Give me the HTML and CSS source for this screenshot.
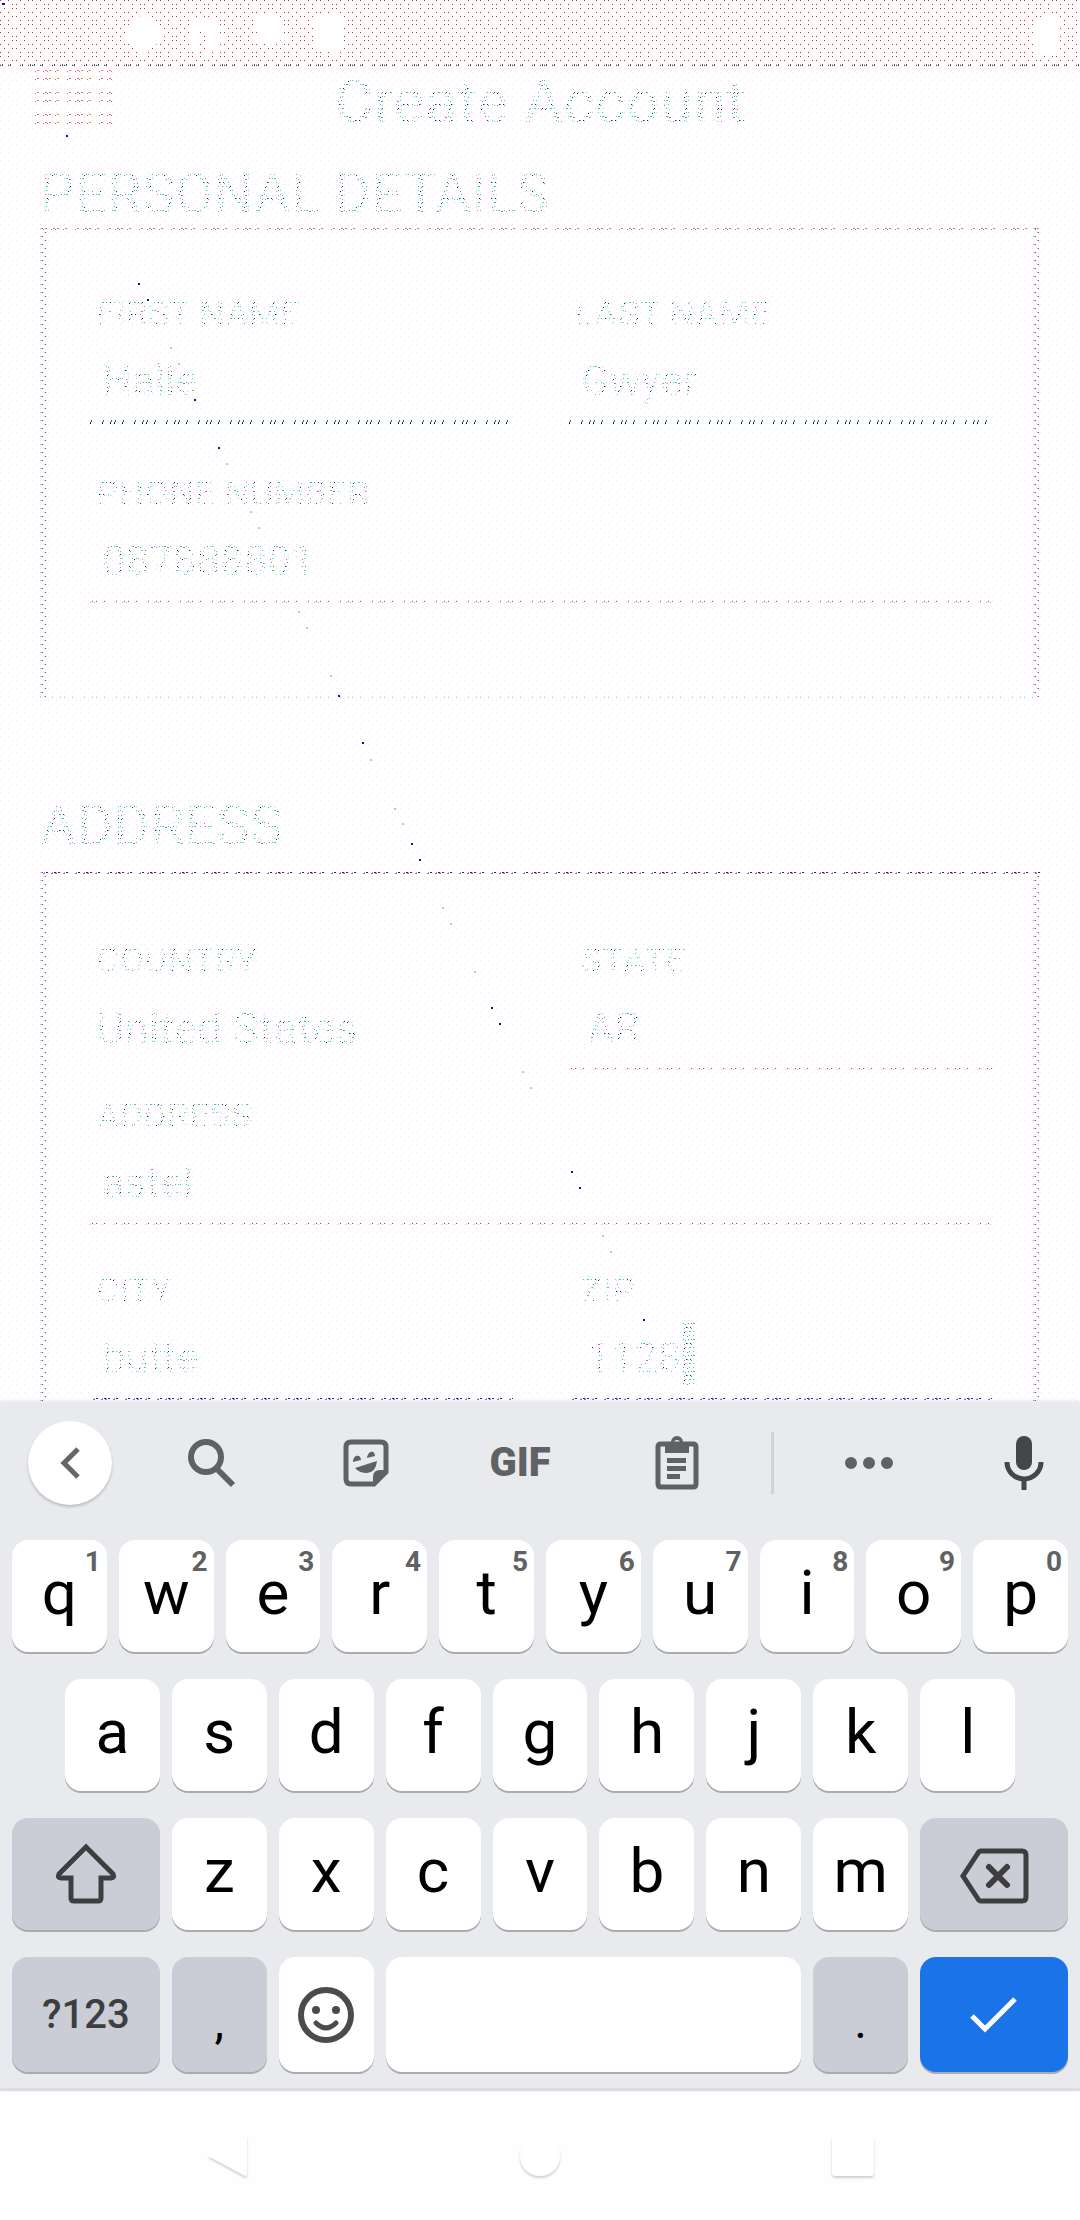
FILE: index.html
```html
<!DOCTYPE html>
<html lang="en">
<head>
<meta charset="utf-8">
<meta name="viewport" content="width=device-width, initial-scale=1">
<title>Create Account</title>
<link rel="stylesheet" href="styles.css">
</head>
<body>
<main class="screen">
  <div class="status">
    <svg class="status-icons" viewBox="0 0 220 40" aria-hidden="true"><path d="M20 2a17 17 0 1 1 0 34a17 17 0 1 1 0-34M66 4h30v32h-12v-20h-8v20h-10zM130 6a20 18 0 0 1 30 0l-4 24h-20zM192 2h28v36h-28z"/></svg>
    <svg class="battery" viewBox="0 0 24 40" aria-hidden="true"><path d="M7 0h10v4h7v36H0V4h7z"/></svg>
  </div>
  <header class="appbar">
    <button class="menu" type="button" aria-label="Menu"><span></span><span></span><span></span></button>
    <h1 class="grain title">Create Account</h1>
  </header>
  <form class="form">
    <h2 class="grain heading">PERSONAL DETAILS</h2>
    <section class="card personal">
      <div class="field green"><label class="grain" for="first">FIRST NAME</label><input class="grain" id="first" value="Halle"></div>
      <div class="field green"><label class="grain" for="last">LAST NAME</label><input class="grain" id="last" value="Gwyer"></div>
      <div class="field wide"><label class="grain" for="phone">PHONE NUMBER</label><input class="grain" id="phone" value="087888801"></div>
    </section>
    <h2 class="grain heading">ADDRESS</h2>
    <section class="card address">
      <div class="field plain"><label class="grain" for="country">COUNTRY</label><select class="grain" id="country"><option>United States</option></select></div>
      <div class="field end"><label class="grain" for="state">STATE</label><input class="grain" id="state" value="AR"></div>
      <div class="field wide"><label class="grain" for="street">ADDRESS</label><input class="grain" id="street" value="astel"></div>
      <div class="field violet"><label class="grain" for="city">CITY</label><input class="grain" id="city" value="butte"></div>
      <div class="field violet end"><label class="grain" for="zip">ZIP</label><input class="grain" id="zip" value="1128"><i class="caret"></i></div>
    </section>
  </form>
  <svg class="specks" width="660" height="1340" aria-hidden="true">
    <path stroke="#10109a" stroke-width="2" d="M66 136h2M2 4h3M138 284h2M147 300h2M194 400h2M218 448h2M338 696h2M362 743h2M411 844h2M419 860h2M491 1008h2M499 1024h2M571 1172h2M579 1188h2M643 1320h2"/>
    <path stroke="#20d040" stroke-width="1" d="M170 348h2M178 364h2M226 464h2M250 512h2M258 528h2M298 612h2M306 628h2M330 676h2M370 760h2M394 809h2M402 824h2M442 908h2M450 924h2M474 972h2M522 1072h2M530 1088h2M602 1236h2M610 1252h2"/>
  </svg>
</main>

<section class="keyboard" aria-label="Keyboard">
  <div class="tools">
    <button type="button" class="back" aria-label="Back"><svg width="84" height="84" viewBox="0 0 84 84"><path d="M50 28 36 42l14 14" fill="none" stroke="#666" stroke-width="5"/></svg></button>
    <button type="button" aria-label="Search"><svg width="48" height="50" viewBox="0 0 48 50"><circle cx="18" cy="19" r="15" fill="none" stroke="#606163" stroke-width="6"/><path d="m29 31 16 16" stroke="#606163" stroke-width="6"/></svg></button>
    <button type="button" aria-label="Stickers"><svg width="46" height="48" viewBox="0 0 46 48"><path d="M8 3h30q5 0 5 5v25L31 45H8q-5 0-5-5V8q0-5 5-5z" fill="none" stroke="#606163" stroke-width="5"/><path d="M30 46V38q0-7 7-7h8zM12 29l22-7q-1 11-10 12-8 0-12-5zM10 23c0-8 8-8 8-2zM24 19c1-8 8-8 8-2z" fill="#606163"/></svg></button>
    <button type="button" class="gif">GIF</button>
    <button type="button" aria-label="Clipboard"><svg width="44" height="54" viewBox="0 0 44 54"><path d="M6 8h32q3 0 3 3v37q0 3-3 3H6q-3 0-3-3V11q0-3 3-3z" fill="none" stroke="#606163" stroke-width="5"/><path fill-rule="evenodd" d="M10 6h6a6 6 0 0 1 12 0h6v11H10zM22 4a3 3 0 1 0 0 6 3 3 0 0 0 0-6M12 22h19v5H12zM12 30h19v5H12zM12 38h13v5H12z" fill="#606163"/></svg></button>
    <span class="divider"></span>
    <button type="button" aria-label="More"><svg width="48" height="12" viewBox="0 0 48 12"><path d="M6 0a6 6 0 1 0 0 12A6 6 0 0 0 6 0M24 0a6 6 0 1 0 0 12A6 6 0 0 0 24 0M42 0a6 6 0 1 0 0 12A6 6 0 0 0 42 0" fill="#606163"/></svg></button>
    <button type="button" aria-label="Voice"><svg width="40" height="54" viewBox="0 0 40 54"><rect x="12" y="0" width="16" height="34" rx="8" fill="#454648"/><path d="M3 26a17 17 0 0 0 34 0M20 42v12" fill="none" stroke="#454648" stroke-width="5"/></svg></button>
  </div>
  <div class="keys">
    <div class="row">
      <button class="key">q<sup>1</sup></button><button class="key">w<sup>2</sup></button><button class="key">e<sup>3</sup></button><button class="key">r<sup>4</sup></button><button class="key">t<sup>5</sup></button><button class="key">y<sup>6</sup></button><button class="key">u<sup>7</sup></button><button class="key">i<sup>8</sup></button><button class="key">o<sup>9</sup></button><button class="key">p<sup>0</sup></button>
    </div>
    <div class="row inset">
      <button class="key">a</button><button class="key">s</button><button class="key">d</button><button class="key">f</button><button class="key">g</button><button class="key">h</button><button class="key">j</button><button class="key">k</button><button class="key">l</button>
    </div>
    <div class="row">
      <button class="key grey big" aria-label="Shift"><svg width="62" height="62" viewBox="0 0 62 62"><path d="M31 4 4 31q-2 4 2 4h10v20q0 3 3 3h24q3 0 3-3V35h10q4 0 2-4z" fill="none" stroke="#3e3e40" stroke-width="5"/></svg></button>
      <button class="key">z</button><button class="key">x</button><button class="key">c</button><button class="key">v</button><button class="key">b</button><button class="key">n</button><button class="key">m</button>
      <button class="key grey big" aria-label="Delete"><svg class="erase" width="70" height="56" viewBox="0 0 70 56"><path d="M22 3h41q4 0 4 4v42q0 4-4 4H22q-2 0-3-2L4 28 19 5q1-2 3-2z" fill="none" stroke="#3e3e40" stroke-width="5"/><path d="m30 19 18 18M48 19 30 37" stroke="#3e3e40" stroke-width="6" stroke-linecap="round"/></svg></button>
    </div>
    <div class="row last">
      <button class="key grey big symbols">?123</button>
      <button class="key grey fixed mark">,</button>
      <button class="key fixed" aria-label="Emoji"><svg width="56" height="58" viewBox="0 0 56 58"><circle cx="28" cy="29" r="25" fill="none" stroke="#4b4b4b" stroke-width="6"/><circle cx="18" cy="24" r="4" fill="#4b4b4b"/><circle cx="38" cy="24" r="4" fill="#4b4b4b"/><path d="M18 37q10 10 20 0" fill="none" stroke="#4b4b4b" stroke-width="5" stroke-linecap="round"/></svg></button>
      <button class="key" aria-label="Space"></button>
      <button class="key grey fixed mark">.</button>
      <button class="key blue big" aria-label="Done"><svg width="50" height="40" viewBox="0 0 50 40"><path d="m3 21 13 13L46 4" fill="none" stroke="#fff" stroke-width="5"/></svg></button>
    </div>
  </div>
</section>

<nav class="nav">
  <button type="button" aria-label="Back"><svg width="44" height="50" viewBox="0 0 44 50"><path d="M3 23 40 3q2 0 2 2v36q0 2-2 2z" fill="#fff"/></svg></button>
  <button type="button" aria-label="Home"><svg width="44" height="50" viewBox="0 0 44 50"><circle cx="22" cy="23" r="20" fill="#fff"/></svg></button>
  <button type="button" aria-label="Recent apps"><svg width="44" height="50" viewBox="0 0 44 50"><rect x="1" y="3" width="42" height="40" rx="3" fill="#fff"/></svg></button>
</nav>
</body>
</html>
```
FILE: styles.css
```css
:root {
  --red-dots: url("data:image/svg+xml,%3Csvg xmlns='http://www.w3.org/2000/svg' width='32' height='32' shape-rendering='crispEdges'%3E%3Cpath fill='%23ff1010' d='M0 0h1v1h-1zM8 0h1v1h-1zM20 0h1v1h-1zM28 0h1v1h-1zM4 4h1v1h-1zM12 4h1v1h-1zM16 4h1v1h-1zM24 4h1v1h-1zM4 8h1v1h-1zM12 8h1v1h-1zM16 8h1v1h-1zM24 8h1v1h-1zM0 12h1v1h-1zM8 12h1v1h-1zM20 12h1v1h-1zM28 12h1v1h-1zM4 16h1v1h-1zM12 16h1v1h-1zM16 16h1v1h-1zM24 16h1v1h-1zM0 20h1v1h-1zM8 20h1v1h-1zM20 20h1v1h-1zM28 20h1v1h-1zM0 24h1v1h-1zM8 24h1v1h-1zM20 24h1v1h-1zM28 24h1v1h-1zM4 28h1v1h-1zM12 28h1v1h-1zM16 28h1v1h-1zM24 28h1v1h-1z'/%3E%3C/svg%3E");
  --pale-dots: url("data:image/svg+xml,%3Csvg xmlns='http://www.w3.org/2000/svg' width='32' height='32' shape-rendering='crispEdges'%3E%3Cpath fill='%23ffdcff' d='M0 0h1v1h-1zM8 0h1v1h-1zM20 0h1v1h-1zM28 0h1v1h-1zM4 4h1v1h-1zM12 4h1v1h-1zM16 4h1v1h-1zM24 4h1v1h-1zM4 8h1v1h-1zM12 8h1v1h-1zM16 8h1v1h-1zM24 8h1v1h-1zM0 12h1v1h-1zM8 12h1v1h-1zM20 12h1v1h-1zM28 12h1v1h-1zM4 16h1v1h-1zM12 16h1v1h-1zM16 16h1v1h-1zM24 16h1v1h-1zM0 20h1v1h-1zM8 20h1v1h-1zM20 20h1v1h-1zM28 20h1v1h-1zM0 24h1v1h-1zM8 24h1v1h-1zM20 24h1v1h-1zM28 24h1v1h-1zM4 28h1v1h-1zM12 28h1v1h-1zM16 28h1v1h-1zM24 28h1v1h-1z'/%3E%3C/svg%3E");
  --grain: url("data:image/svg+xml,%3Csvg xmlns='http://www.w3.org/2000/svg' width='16' height='16' shape-rendering='crispEdges'%3E%3Cpath fill='%2310dcd8' d='M0 0h1v1h-1zM8 0h1v1h-1zM4 4h1v1h-1zM12 4h1v1h-1zM2 8h1v1h-1zM10 8h1v1h-1zM6 12h1v1h-1zM14 12h1v1h-1z'/%3E%3Cpath fill='%2330e050' d='M2 1h1v1h-1zM10 0h2v1h-2zM14 5h1v1h-1zM6 8h2v1h-2zM0 12h1v1h-1zM10 12h1v1h-1z'/%3E%3Cpath fill='%23d850e8' d='M5 0h1v1h-1zM13 1h2v1h-2zM1 5h1v1h-1zM8 5h1v1h-1zM13 9h1v1h-1zM4 13h1v1h-1z'/%3E%3Cpath fill='%23202858' d='M7 4h1v1h-1zM1 9h1v1h-1zM12 13h1v1h-1zM14 8h1v1h-1zM3 4h1v1h-1z'/%3E%3C/svg%3E");
  --edge-x: url("data:image/svg+xml,%3Csvg xmlns='http://www.w3.org/2000/svg' width='32' height='3' shape-rendering='crispEdges'%3E%3Cpath fill='%23f07a30' d='M5 0h2v1h-2zM13 0h2v1h-2zM17 0h2v1h-2zM25 0h2v1h-2z'/%3E%3Cpath fill='%23e050d8' d='M3 1h1v1h-1zM11 1h1v1h-1zM15 1h1v1h-1zM23 1h1v1h-1z'/%3E%3C/svg%3E");
  --edge-violet: url("data:image/svg+xml,%3Csvg xmlns='http://www.w3.org/2000/svg' width='32' height='3' shape-rendering='crispEdges'%3E%3Cpath fill='%23301898' d='M6 0h2v1h-2zM14 0h2v1h-2zM18 0h2v1h-2zM26 0h2v1h-2z'/%3E%3Cpath fill='%2350d8d8' d='M4 0h1v1h-1zM12 0h1v1h-1zM16 0h1v1h-1zM24 0h1v1h-1z'/%3E%3Cpath fill='%23f040c0' d='M3 1h2v1h-2zM11 1h2v1h-2zM15 1h2v1h-2zM23 1h2v1h-2z'/%3E%3C/svg%3E");
  --edge-red: url("data:image/svg+xml,%3Csvg xmlns='http://www.w3.org/2000/svg' width='32' height='3' shape-rendering='crispEdges'%3E%3Cpath fill='%23ff2a10' d='M2 0h1v1h-1zM6 0h1v1h-1zM14 0h1v1h-1zM26 0h1v1h-1z'/%3E%3Cpath fill='%23b8c8b0' d='M0 1h1v1h-1zM4 1h1v1h-1zM12 1h1v1h-1zM24 1h1v1h-1z'/%3E%3C/svg%3E");
  --edge-green: url("data:image/svg+xml,%3Csvg xmlns='http://www.w3.org/2000/svg' width='32' height='4' shape-rendering='crispEdges'%3E%3Cpath fill='%2300a020' d='M1 0h1v2h-1zM13 0h1v2h-1zM21 0h1v2h-1zM25 0h1v2h-1z'/%3E%3Cpath fill='%23003000' d='M0 2h1v2h-1zM12 2h1v2h-1zM20 2h1v2h-1zM24 2h1v2h-1z'/%3E%3C/svg%3E");
  --edge-cyan: url("data:image/svg+xml,%3Csvg xmlns='http://www.w3.org/2000/svg' width='32' height='1' shape-rendering='crispEdges'%3E%3Cpath fill='%2340f0e8' d='M0 0h1v1h-1zM12 0h1v1h-1zM20 0h1v1h-1zM24 0h1v1h-1z'/%3E%3C/svg%3E");
  --edge-y: url("data:image/svg+xml,%3Csvg xmlns='http://www.w3.org/2000/svg' width='7' height='16' shape-rendering='crispEdges'%3E%3Cpath fill='%2380d8f0' d='M0 0h2v1h-2zM4 4h1v1h-1zM0 8h2v1h-2zM4 12h1v1h-1z'/%3E%3Cpath fill='%23f01888' d='M2 0h1v1h-1zM5 4h1v1h-1zM2 8h1v1h-1zM5 12h1v1h-1z'/%3E%3C/svg%3E");
  --rule: url("data:image/svg+xml,%3Csvg xmlns='http://www.w3.org/2000/svg' width='32' height='3' shape-rendering='crispEdges'%3E%3Cpath fill='%23f0e020' d='M0 0h1v1h-1zM8 0h1v1h-1zM20 0h1v1h-1zM28 0h1v1h-1z'/%3E%3Cpath fill='%23c01830' d='M2 0h1v1h-1zM10 0h1v1h-1zM22 0h1v1h-1zM30 0h1v1h-1z'/%3E%3Cpath fill='%233030c0' d='M0 1h1v1h-1zM2 1h1v1h-1zM8 1h1v1h-1zM10 1h1v1h-1zM20 1h1v1h-1zM22 1h1v1h-1zM28 1h1v1h-1zM30 1h1v1h-1z'/%3E%3C/svg%3E");
}

* { box-sizing: border-box; }

body {
  margin: 0;
  height: 100vh;
  display: flex;
  flex-direction: column;
  background: #fff;
  font-family: Roboto, "Liberation Sans", sans-serif;
}

button { border: 0; padding: 0; background: none; font-family: inherit; }
svg { display: block; }

.screen {
  position: relative;
  flex: 1 1 0;
  min-height: 0;
  overflow: hidden;
  background: var(--pale-dots);
}

.status {
  display: flex;
  justify-content: space-between;
  align-items: center;
  height: 68px;
  padding: 0 20px 0 124px;
  background: var(--rule) 0 64px repeat-x, linear-gradient(#fff, #fff) 0 64px / 100% 4px no-repeat, var(--red-dots) #fff;
}
.status-icons { width: 220px; height: 40px; fill: #fff; }
.battery { width: 24px; height: 40px; fill: #fff; }

.appbar {
  display: grid;
  grid-template-columns: 80px 1fr 80px;
  align-items: center;
  padding: 0 32px;
  height: 68px;
}
.menu { display: grid; gap: 12px; height: 64px; align-content: start; }
.menu span { height: 10px; background: var(--edge-x) 0 0 repeat-x, var(--edge-x) 0 8px repeat-x; }

.grain {
  color: transparent;
  background: var(--grain);
  -webkit-background-clip: text;
  background-clip: text;
}
.title { margin: 0; font-size: 60px; line-height: 68px; font-weight: 400; text-align: center; }

.form { padding: 26px 40px 0; }
.heading { margin: 0; font-size: 56px; line-height: 64px; font-weight: 400; }

.card {
  display: grid;
  grid-template-columns: 1fr 1fr;
  column-gap: 56px;
  align-content: start;
  padding: 66px 48px 0 50px;
  background: var(--edge-x) 0 0 repeat-x, var(--edge-cyan) 0 100% repeat-x, var(--edge-y) 0 0 repeat-y, var(--edge-y) 100% 0 repeat-y;
}
.personal { height: 470px; margin-top: 2px; margin-bottom: 96px; row-gap: 50px; }
.address {
  height: 620px;
  margin-top: 14px;
  padding-top: 69px;
  row-gap: 25px;
  background: var(--edge-violet) 0 0 repeat-x, var(--edge-y) 0 0 repeat-y, var(--edge-y) 100% 0 repeat-y;
}

.field {
  position: relative;
  display: grid;
  grid-template-rows: 40px 76px 14px;
  min-width: 0;
  background: var(--edge-red) 0 100% repeat-x;
}
.wide { grid-column: span 2; }
.green { background-image: var(--edge-green); }
.violet { background-image: var(--edge-violet); }
.plain { background-image: none; }
.address .wide { margin-bottom: 20px; }
.field label { justify-self: start; margin-left: 6px; font-size: 36px; line-height: 40px; }
.field input, .field select {
  appearance: none;
  width: 100%;
  min-width: 0;
  border: 0;
  padding: 18px 0 0 12px;
  font-family: inherit;
  font-size: 42px;
  line-height: 48px;
  outline: 0;
}
.field select { padding-left: 6px; padding-top: 20px; font-size: 44px; opacity: 1; }
.end label { margin-left: 12px; }
.end input { padding-left: 18px; }
.caret {
  position: absolute;
  left: 114px;
  top: 52px;
  width: 12px;
  height: 62px;
  background: var(--grain);
}

.specks { position: absolute; left: 0; top: 0; }

.keyboard { flex: none; background: #e8eaed; border-bottom: 3px solid #dedede; box-shadow: 0 -1px 4px #0000001a; position: relative; overflow: hidden; }
.tools {
  display: grid;
  grid-template-columns: 140fr 144fr 164fr 144fr 170fr 20fr 174fr 136fr;
  align-items: center;
  justify-items: center;
  height: 121px;
  margin-right: -12px;
}
.back { border-radius: 50%; background: #fff; box-shadow: 0 2px 3px #0003; }
.gif { color: #606163; font-size: 40px; line-height: 40px; font-weight: 900; }
.divider { width: 3px; height: 62px; background: #d0d2d6; }

.keys { display: grid; gap: 27px; padding: 17px 12px 16px; }
.row { display: flex; gap: 12px; height: 112px; }
.inset { padding: 0 5%; }
.last { height: 115px; }
.key {
  position: relative;
  display: flex;
  align-items: center;
  justify-content: center;
  flex: 1 1 0;
  min-width: 0;
  padding-bottom: 6px;
  border-radius: 16px;
  background: #fff;
  box-shadow: 0 2px 0 #a9abae;
  color: #000;
  font-size: 62px;
  line-height: 72px;
}
.key sup { position: absolute; right: 6px; top: 6px; color: #606163; font-size: 28px; line-height: 32px; font-weight: 700; }
.grey { background: #cbcdd6; }
.blue { background: #1b73e8; }
.big { flex: 0 0 14%; padding-bottom: 0; }
.fixed { flex: 0 0 9%; padding-bottom: 0; }
.symbols { color: #3e3e40; font-size: 40px; font-weight: 500; }
.mark { padding-top: 14px; font-size: 48px; }
.erase { margin-top: 4px; }

.nav {
  flex: none;
  display: flex;
  justify-content: space-between;
  align-items: center;
  height: 129px;
  padding: 4px 19% 0;
  background: #fefefe;
}
.nav svg { filter: drop-shadow(0 2px 1px #0000002e); }
```
